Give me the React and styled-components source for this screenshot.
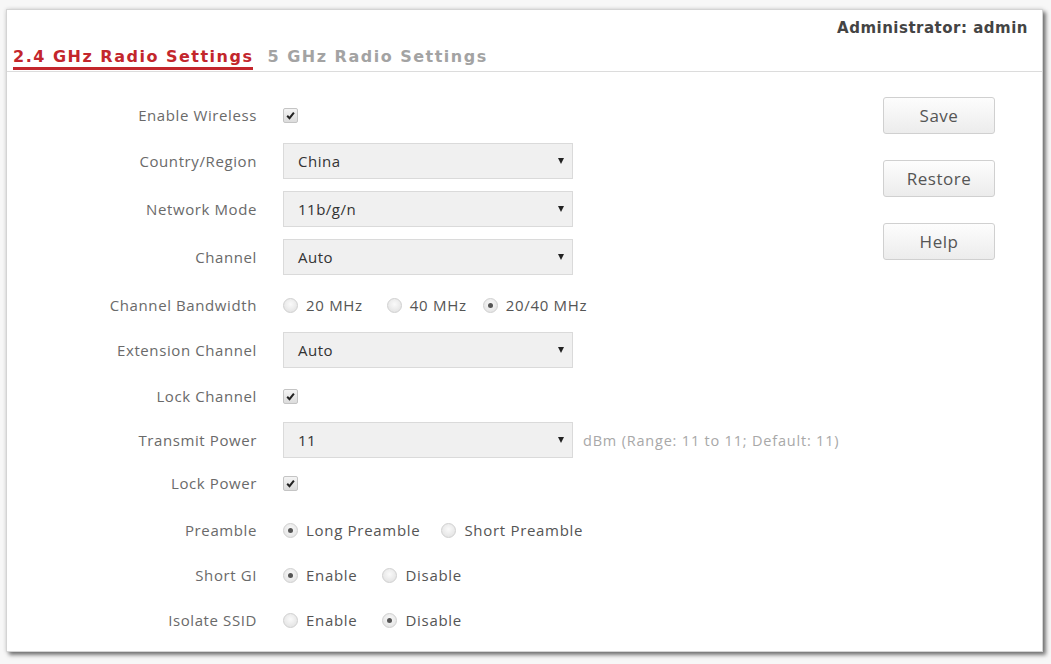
import React from "react";
import styled, { createGlobalStyle } from "styled-components";

const GlobalStyle = createGlobalStyle`
  html, body {
    margin: 0;
    padding: 0;
    background: #f7f7f7;
  }
  body {
    font-family: "Open Sans", "Noto Sans", sans-serif;
  }
`;

const Page = styled.div`
  width: 1051px;
  height: 664px;
  padding: 9px 0 0 6px;
  box-sizing: border-box;
`;

const Panel = styled.div`
  width: 1037px;
  height: 643px;
  background: #fff;
  border: 1px solid #d4d4d4;
  box-sizing: border-box;
  box-shadow: 3px 3px 4px rgba(0, 0, 0, 0.5), 0 0 4px rgba(0, 0, 0, 0.15);
  display: flex;
  flex-direction: column;
`;

const Header = styled.div`
  height: 61px;
  border-bottom: 1px solid #dcdcdc;
  display: flex;
  align-items: flex-end;
  justify-content: space-between;
  padding: 0 14px 0 6px;
`;

const Tabs = styled.div`
  display: flex;
  gap: 14px;
  margin-bottom: 1px;
`;

const Tab = styled.div`
  font-family: "DejaVu Sans", Verdana, sans-serif;
  font-weight: bold;
  font-size: 16px;
  letter-spacing: 1.5px;
  color: ${({ $active }) => ($active ? "#c3262c" : "#a3a3a3")};
  border-bottom: 3px solid ${({ $active }) => ($active ? "#c3262c" : "transparent")};
  line-height: 20px;
`;

const Admin = styled.div`
  align-self: flex-start;
  margin-top: 9px;
  font-family: "DejaVu Sans", Verdana, sans-serif;
  font-weight: bold;
  font-size: 15px;
  letter-spacing: 0.5px;
  color: #444;
`;

const Body = styled.div`
  display: flex;
  padding-top: 25px;
`;

const Form = styled.div`
  display: flex;
  flex-direction: column;
  width: 876px;
`;

const Row = styled.div`
  display: flex;
  align-items: center;
  height: 36px;
  margin-top: ${({ $mt = 10 }) => $mt}px;
  &:first-child {
    margin-top: 0;
  }
`;

const Label = styled.div`
  width: 250px;
  text-align: right;
  font-size: 15px;
  letter-spacing: 0.6px;
  color: #6a6a6a;
  padding-right: 26px;
  flex-shrink: 0;
`;

const Select = styled.div`
  width: 290px;
  height: 36px;
  box-sizing: border-box;
  background: #f0f0f0;
  border: 1px solid #dadada;
  display: flex;
  align-items: center;
  justify-content: space-between;
  padding: 0 8px 0 14px;
  font-size: 15px;
  letter-spacing: 0.5px;
  color: #333;
`;

const Arrow = styled.span`
  width: 0;
  height: 0;
  border-left: 3.5px solid transparent;
  border-right: 3.5px solid transparent;
  border-top: 6px solid #222;
`;

const Hint = styled.span`
  margin-left: 10px;
  font-size: 14.5px;
  letter-spacing: 0.8px;
  color: #a8a8a8;
`;

const Check = styled.span`
  width: 13px;
  height: 13px;
  border: 1px solid #c4c4c4;
  border-radius: 2px;
  background: linear-gradient(#f4f4f4, #dcdcdc);
  display: flex;
  align-items: center;
  justify-content: center;
`;

const Options = styled.div`
  display: flex;
  align-items: center;
`;

const Option = styled.label`
  display: flex;
  align-items: center;
  gap: 8px;
  font-size: 15px;
  letter-spacing: 0.7px;
  color: #555;
  margin-right: ${({ $gap }) => $gap}px;
`;

const Radio = styled.span`
  width: 13px;
  height: 13px;
  border: 1px solid #d0d0d0;
  border-radius: 50%;
  background: radial-gradient(circle at 50% 40%, #fafafa, #dedede);
  display: flex;
  align-items: center;
  justify-content: center;
  &::after {
    content: "";
    width: 5px;
    height: 5px;
    border-radius: 50%;
    background: ${({ $on }) => ($on ? "#555" : "transparent")};
  }
`;

const Buttons = styled.div`
  display: flex;
  flex-direction: column;
  gap: 26px;
`;

const Button = styled.button`
  width: 112px;
  height: 37px;
  border: 1px solid #d0d0d0;
  border-radius: 3px;
  background: linear-gradient(#fdfdfd, #ececec);
  font-family: "Open Sans", "Noto Sans", sans-serif;
  font-size: 17px;
  letter-spacing: 0.5px;
  color: #555;
`;

function CheckMark() {
  return (
    <Check>
      <svg width="9" height="9" viewBox="0 0 9 9">
        <path d="M1.2 4.8 L3.5 7.2 L7.9 1.6" fill="none" stroke="#222" strokeWidth="2" />
      </svg>
    </Check>
  );
}

function RadioGroup({ items, value, gap }) {
  return (
    <Options>
      {items.map((it, i) => (
        <Option key={it} $gap={gap[i] || 0}>
          <Radio $on={value === i} />
          {it}
        </Option>
      ))}
    </Options>
  );
}

export default function App() {
  return (
    <Page>
      <GlobalStyle />
      <Panel>
        <Header>
          <Tabs>
            <Tab $active>2.4 GHz Radio Settings</Tab>
            <Tab>5 GHz Radio Settings</Tab>
          </Tabs>
          <Admin>Administrator: admin</Admin>
        </Header>
        <Body>
          <Form>
            <Row>
              <Label>Enable Wireless</Label>
              <CheckMark />
            </Row>
            <Row>
              <Label>Country/Region</Label>
              <Select>China<Arrow /></Select>
            </Row>
            <Row $mt={12}>
              <Label>Network Mode</Label>
              <Select>11b/g/n<Arrow /></Select>
            </Row>
            <Row $mt={12}>
              <Label>Channel</Label>
              <Select>Auto<Arrow /></Select>
            </Row>
            <Row $mt={12}>
              <Label>Channel Bandwidth</Label>
              <RadioGroup items={["20 MHz", "40 MHz", "20/40 MHz"]} value={2} gap={[24, 16]} />
            </Row>
            <Row $mt={9}>
              <Label>Extension Channel</Label>
              <Select>Auto<Arrow /></Select>
            </Row>
            <Row>
              <Label>Lock Channel</Label>
              <CheckMark />
            </Row>
            <Row $mt={8}>
              <Label>Transmit Power</Label>
              <Select>11<Arrow /></Select>
              <Hint>dBm (Range: 11 to 11; Default: 11)</Hint>
            </Row>
            <Row $mt={7}>
              <Label>Lock Power</Label>
              <CheckMark />
            </Row>
            <Row $mt={11}>
              <Label>Preamble</Label>
              <RadioGroup items={["Long Preamble", "Short Preamble"]} value={0} gap={[21]} />
            </Row>
            <Row $mt={9}>
              <Label>Short GI</Label>
              <RadioGroup items={["Enable", "Disable"]} value={0} gap={[25]} />
            </Row>
            <Row $mt={9}>
              <Label>Isolate SSID</Label>
              <RadioGroup items={["Enable", "Disable"]} value={1} gap={[25]} />
            </Row>
          </Form>
          <Buttons>
            <Button>Save</Button>
            <Button>Restore</Button>
            <Button>Help</Button>
          </Buttons>
        </Body>
      </Panel>
    </Page>
  );
}
